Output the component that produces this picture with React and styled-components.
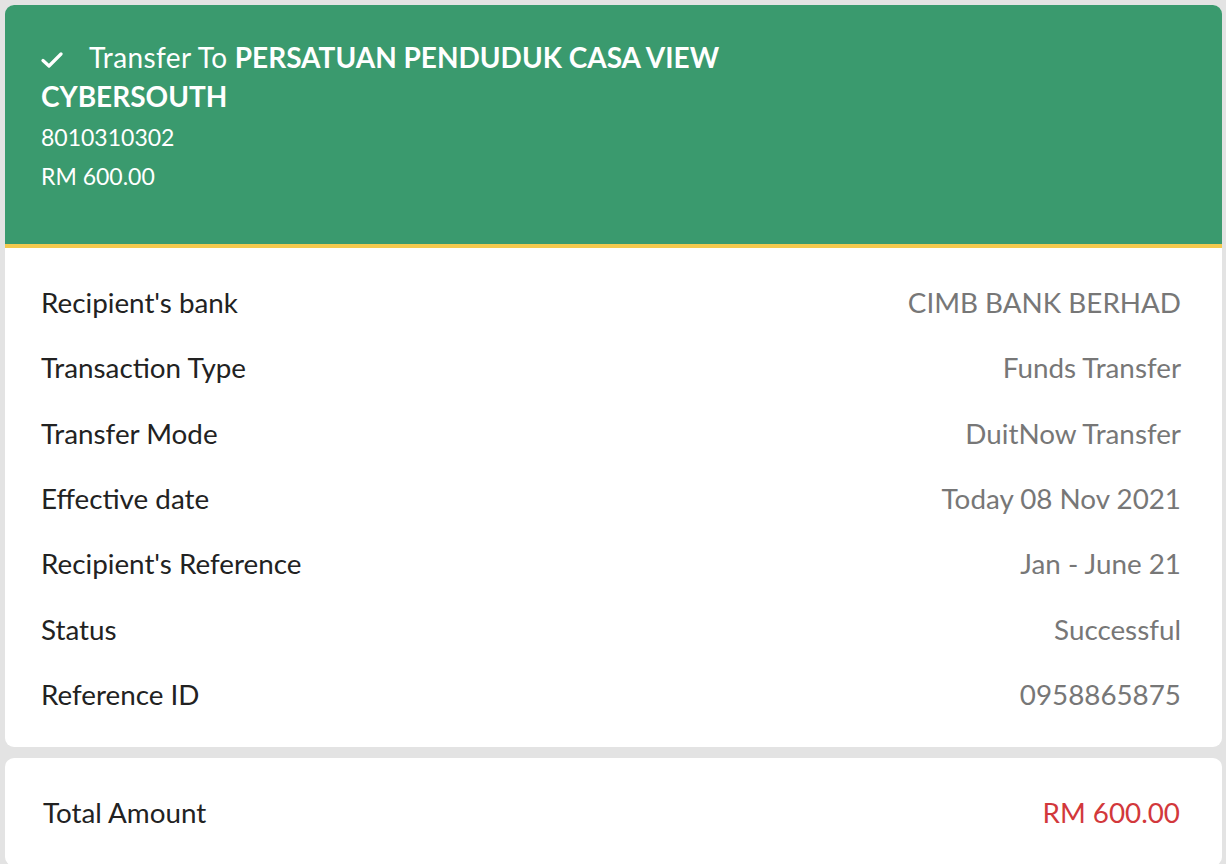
import React from "react";
import styled, { createGlobalStyle } from "styled-components";

const GlobalStyle = createGlobalStyle`
  html, body {
    margin: 0;
    padding: 0;
    background: #e3e3e3;
    font-family: Lato, "Open Sans", sans-serif;
  }
`;

const Page = styled.div`
  padding: 5px 4px 0 5px;
  display: flex;
  flex-direction: column;
  gap: 11px;
  height: 864px;
  box-sizing: border-box;
  overflow: hidden;
`;

const Card = styled.div`
  background: #ffffff;
  border-radius: 9px;
  overflow: hidden;
  flex-shrink: 0;
`;

const Header = styled.div`
  background: #3a9a6e;
  border-bottom: 4px solid #f4c94e;
  color: #ffffff;
  padding: 33px 36px 0 36px;
  height: 243px;
  box-sizing: border-box;
`;

const Title = styled.div`
  font-size: 28px;
  line-height: 39px;
  width: 720px;
`;

const Lead = styled.span`
  letter-spacing: 0.4px;
`;

const Check = styled.svg`
  width: 22px;
  height: 18px;
  margin-right: 26px;
  vertical-align: -1px;
`;

const Strong = styled.b`
  font-weight: 700;
`;

const Details = styled.div`
  margin-top: 2px;
`;

const Sub = styled.div`
  font-size: 23px;
  line-height: 39px;
`;

const Rows = styled.div`
  padding: 22px 41px 20px 36px;
`;

const Row = styled.div`
  display: flex;
  justify-content: space-between;
  align-items: center;
  height: 65.3px;
  font-size: 27.8px;
`;

const Label = styled.span`
  color: #222222;
`;

const Value = styled.span`
  color: ${(p) => (p.$accent ? "#d2383b" : "#777777")};
`;

const TotalRow = styled(Row)`
  height: 108px;
  padding: 0 42px 0 38px;
`;

const rows = [
  ["Recipient's bank", "CIMB BANK BERHAD"],
  ["Transaction Type", "Funds Transfer"],
  ["Transfer Mode", "DuitNow Transfer"],
  ["Effective date", "Today 08 Nov 2021"],
  ["Recipient's Reference", "Jan - June 21"],
  ["Status", "Successful"],
  ["Reference ID", "0958865875"],
];

export default function App() {
  return (
    <>
      <GlobalStyle />
      <Page>
        <Card>
          <Header>
            <Title>
              <Check viewBox="0 0 22 18">
                <path d="M2 9.5 L8 15 L20 3" fill="none" stroke="#fff" strokeWidth="3.2" strokeLinecap="round" strokeLinejoin="round" />
              </Check>
              <Lead>Transfer To</Lead> <Strong>PERSATUAN PENDUDUK CASA VIEW CYBERSOUTH</Strong>
            </Title>
            <Details>
              <Sub>8010310302</Sub>
              <Sub>RM 600.00</Sub>
            </Details>
          </Header>
          <Rows>
            {rows.map(([l, v]) => (
              <Row key={l}>
                <Label>{l}</Label>
                <Value>{v}</Value>
              </Row>
            ))}
          </Rows>
        </Card>
        <Card>
          <TotalRow>
            <Label>Total Amount</Label>
            <Value $accent>RM 600.00</Value>
          </TotalRow>
        </Card>
      </Page>
    </>
  );
}
